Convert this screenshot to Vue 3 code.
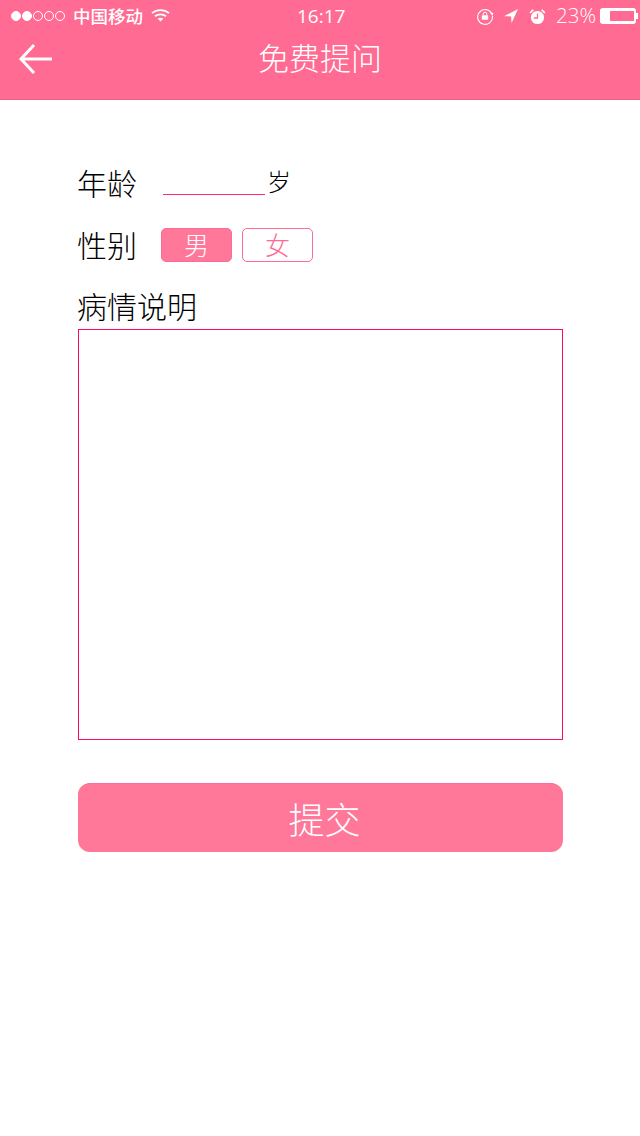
<script setup>
const dots = [true, true, false, false, false]
</script>

<template>
  <div class="page">
    <header class="head">
      <div class="status">
        <div class="status-left">
          <div class="dots">
            <span v-for="(on, i) in dots" :key="i" class="dot" :class="{ on }"></span>
          </div>
          <span class="carrier">中国移动</span>
          <svg class="wifi" width="19" height="14" viewBox="0 0 19 14">
            <path d="M1 5.2C5.6 1 13.4 1 18 5.2" fill="none" stroke="#fff" stroke-width="1.8"/>
            <path d="M4 8.2C7 5.7 12 5.7 15 8.2" fill="none" stroke="#fff" stroke-width="1.8"/>
            <path d="M6.6 10.6C8.2 9.3 10.8 9.3 12.4 10.6L9.5 13.4Z" fill="#fff"/>
          </svg>
        </div>
        <span class="time">16:17</span>
        <div class="status-right">
          <svg class="ic-lock" width="18" height="18" viewBox="0 0 18 18">
            <path d="M15.6 6.5A7.4 7.4 0 1 0 16.4 9" fill="none" stroke="#fff" stroke-width="1.1"/>
            <path d="M14 5.6L17.4 6L16.4 9Z" fill="#fff"/>
            <rect x="5.8" y="8.2" width="6.4" height="4.6" rx=".6" fill="#fff"/>
            <path d="M7.2 8.2V7a1.8 1.8 0 0 1 3.6 0V8.2" fill="none" stroke="#fff" stroke-width="1"/>
          </svg>
          <svg class="ic-loc" width="16" height="16" viewBox="0 0 16 16">
            <path d="M15 1L1 8.2L8 8.4L8.6 15Z" fill="#fff"/>
          </svg>
          <svg class="ic-alarm" width="17" height="17" viewBox="0 0 17 17">
            <circle cx="8.5" cy="9.5" r="6.6" fill="#fff"/>
            <path d="M8.5 5.5V10H4.8" fill="none" stroke="#ff6b92" stroke-width="1.3"/>
            <path d="M0.6 4.2L3.6 1.2L5 2.2L1.6 5.6ZM16.4 4.2L13.4 1.2L12 2.2L15.4 5.6Z" fill="#fff"/>
          </svg>
          <span class="pct">23%</span>
          <div class="battery"><span class="level"></span></div>
          <span class="nub"></span>
        </div>
      </div>
      <div class="nav">
        <svg class="back" width="34" height="32" viewBox="0 0 34 32">
          <path d="M33 16H3M15 2L2 16L15 30" fill="none" stroke="#fff" stroke-width="3"/>
        </svg>
        <h1 class="title">免费提问</h1>
      </div>
    </header>

    <main class="form">
      <div class="row age-row">
        <span class="label">年龄</span>
        <span class="age-line"></span>
        <span class="unit">岁</span>
      </div>
      <div class="row sex-row">
        <span class="label sex-label">性别</span>
        <div class="sex-options">
          <span class="sex active">男</span>
          <span class="sex">女</span>
        </div>
      </div>
      <div class="label desc-label">病情说明</div>
      <div class="desc"></div>
      <div class="submit">提交</div>
    </main>
  </div>
</template>

<style scoped>
.page {
  width: 640px;
  height: 1136px;
  background: #fff;
  overflow: hidden;
  font-family: "Noto Sans CJK SC", "Liberation Sans", sans-serif;
  font-weight: 300;
  color: #000;
}
.head {
  height: 100px;
  box-sizing: border-box;
  background: #ff6b92;
  border-bottom: 1px solid #ec5f86;
  color: #fff;
}
.status {
  height: 32px;
  display: flex;
  align-items: center;
  justify-content: space-between;
  position: relative;
}
.status-left {
  display: flex;
  align-items: center;
  padding-left: 11px;
}
.dots {
  display: flex;
  gap: 1px;
}
.dot {
  width: 10px;
  height: 10px;
  box-sizing: border-box;
  border: 1px solid #fff;
  border-radius: 50%;
}
.dot.on {
  background: #fff;
}
.carrier {
  margin-left: 8px;
  font-size: 17.5px;
  font-weight: 500;
  line-height: 32px;
}
.wifi {
  margin-left: 8px;
  margin-top: -3px;
}
.time {
  position: absolute;
  left: 297px;
  top: 0;
  font-family: "Open Sans", sans-serif;
  font-size: 19px;
  font-weight: 400;
  line-height: 33px;
}
.status-right {
  display: flex;
  align-items: center;
  padding-right: 2px;
}
.ic-lock {
  margin-right: 9px;
}
.ic-loc {
  margin-right: 10px;
}
.ic-alarm {
  margin-right: 10px;
}
.pct {
  font-family: "Open Sans", sans-serif;
  font-size: 20.5px;
  font-weight: 300;
  line-height: 28px;
  margin: -3px 4px 0 0;
}
.battery {
  width: 36px;
  height: 16px;
  box-sizing: border-box;
  background: #fff;
  border-radius: 3px;
  padding: 3px 2px 3px 10px;
}
.level {
  display: block;
  height: 100%;
  background: #ff6b92;
}
.nub {
  width: 2px;
  height: 6px;
  background: #fff;
}
.nav {
  height: 67px;
  display: flex;
  align-items: center;
  justify-content: center;
  position: relative;
}
.back {
  position: absolute;
  left: 19px;
  top: 11px;
}
.title {
  margin: 0 0 17px;
  font-size: 31px;
  font-weight: 300;
  line-height: 44px;
}
.form {
  padding: 0 77px 0 78px;
}
.row {
  display: flex;
  align-items: center;
}
.label {
  font-size: 30px;
  line-height: 44px;
  margin-left: -1px;
}
.age-row {
  margin-top: 60px;
  height: 44px;
}
.age-line {
  width: 102px;
  height: 1px;
  background: #ff2a70;
  margin: 24px 0 0 26px;
}
.unit {
  font-size: 24px;
  line-height: 32px;
  margin-left: 2px;
  margin-top: -2px;
}
.sex-row {
  margin-top: 19px;
  height: 44px;
}
.sex-label {
  margin-top: -2px;
}
.sex-options {
  display: flex;
  gap: 10px;
  margin-left: 24px;
}
.sex {
  width: 71px;
  height: 34px;
  box-sizing: border-box;
  border: 1px solid #ff6b92;
  border-radius: 5px;
  color: #ff6b92;
  font-size: 25px;
  line-height: 30px;
  text-align: center;
}
.sex.active {
  background: #ff7799;
  color: #fff;
}
.desc-label {
  margin-top: 16px;
  height: 43px;
  line-height: 44px;
}
.desc {
  width: 485px;
  height: 411px;
  box-sizing: border-box;
  border: 1px solid #ff0a5c;
  margin-top: 3px;
}
.submit {
  width: 485px;
  height: 69px;
  box-sizing: border-box;
  margin-top: 43px;
  background: #ff7799;
  border-top: 1px solid #fb6d92;
  border-radius: 12px;
  color: #fff;
  font-size: 36px;
  line-height: 68px;
  text-align: center;
  padding-left: 8px;
}
</style>
